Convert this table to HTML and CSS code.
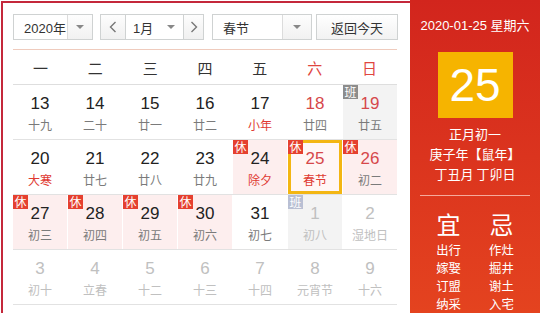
FILE: index.html
```html
<!DOCTYPE html>
<html lang="zh-CN">
<head>
<meta charset="utf-8">
<title>万年历</title>
<link rel="stylesheet" href="styles.css">
</head>
<body>
<div class="wrap">
  <div class="main">
    <div class="toolbar">
      <div class="sel sel-year"><span class="sel-text">2020年</span><span class="sel-arrow"><i class="tri"></i></span></div>
      <div class="monthgroup">
        <span class="nav"><svg width="8" height="12" viewBox="0 0 8 12"><polyline points="6.5,1 1.5,6 6.5,11" fill="none" stroke="#777" stroke-width="1.4"/></svg></span>
        <div class="sel sel-month"><span class="sel-text">1月</span><span class="sel-arrow plain"><i class="tri"></i></span></div>
        <span class="nav"><svg width="8" height="12" viewBox="0 0 8 12"><polyline points="1.5,1 6.5,6 1.5,11" fill="none" stroke="#777" stroke-width="1.4"/></svg></span>
      </div>
      <div class="sel sel-hol"><span class="sel-text">春节</span><span class="sel-arrow"><i class="tri"></i></span></div>
      <span class="today">返回今天</span>
    </div>

    <div class="weekhead">
      <span>一</span><span>二</span><span>三</span><span>四</span><span>五</span><span class="red">六</span><span class="red">日</span>
    </div>

    <div class="rows">
      <div class="row">
        <div class="c"><b>13</b><i>十九</i></div>
        <div class="c"><b>14</b><i>二十</i></div>
        <div class="c"><b>15</b><i>廿一</i></div>
        <div class="c"><b>16</b><i>廿二</i></div>
        <div class="c fest"><b>17</b><i>小年</i></div>
        <div class="c we"><b>18</b><i>廿四</i></div>
        <div class="c we work"><em class="badge ban">班</em><b>19</b><i>廿五</i></div>
      </div>
      <div class="row">
        <div class="c fest"><b>20</b><i>大寒</i></div>
        <div class="c"><b>21</b><i>廿七</i></div>
        <div class="c"><b>22</b><i>廿八</i></div>
        <div class="c"><b>23</b><i>廿九</i></div>
        <div class="c hol fest"><em class="badge xiu">休</em><b>24</b><i>除夕</i></div>
        <div class="c hol fest we cur"><em class="badge xiu">休</em><b>25</b><i>春节</i></div>
        <div class="c hol we"><em class="badge xiu">休</em><b>26</b><i>初二</i></div>
      </div>
      <div class="row">
        <div class="c hol"><em class="badge xiu">休</em><b>27</b><i>初三</i></div>
        <div class="c hol"><em class="badge xiu">休</em><b>28</b><i>初四</i></div>
        <div class="c hol"><em class="badge xiu">休</em><b>29</b><i>初五</i></div>
        <div class="c hol"><em class="badge xiu">休</em><b>30</b><i>初六</i></div>
        <div class="c"><b>31</b><i>初七</i></div>
        <div class="c other work"><em class="badge ban faded">班</em><b>1</b><i>初八</i></div>
        <div class="c other"><b>2</b><i>湿地日</i></div>
      </div>
      <div class="row">
        <div class="c other"><b>3</b><i>初十</i></div>
        <div class="c other"><b>4</b><i>立春</i></div>
        <div class="c other"><b>5</b><i>十二</i></div>
        <div class="c other"><b>6</b><i>十三</i></div>
        <div class="c other"><b>7</b><i>十四</i></div>
        <div class="c other"><b>8</b><i>元宵节</i></div>
        <div class="c other"><b>9</b><i>十六</i></div>
      </div>
    </div>
  </div>

  <div class="panel">
    <div class="p-date">2020-01-25 星期六</div>
    <div class="p-day">25</div>
    <div class="p-info">
      <div>正月初一</div>
      <div>庚子年【鼠年】</div>
      <div>丁丑月 丁卯日</div>
    </div>
    <div class="p-line"></div>
    <div class="p-yj">
      <div class="p-col">
        <div class="p-big">宜</div>
        <div>出行</div><div>嫁娶</div><div>订盟</div><div>纳采</div>
      </div>
      <div class="p-col">
        <div class="p-big">忌</div>
        <div>作灶</div><div>掘井</div><div>谢土</div><div>入宅</div>
      </div>
    </div>
  </div>
</div>
</body>
</html>
```

FILE: styles.css
```css
* { box-sizing: border-box; }
html, body { margin: 0; padding: 0; background: #fff; }
body {
  font-family: "Liberation Sans", "Noto Sans CJK SC", sans-serif;
  color: #333;
  overflow: hidden;
}
.wrap {
  display: flex;
  width: 545px;
  height: 313px;
  overflow: hidden;
}
.main {
  width: 409px;
  margin: 1px 0 0 1px;
  border-top: 2px solid #c4283b;
  border-left: 2px solid #c4283b;
  padding: 11px 12px 0 10px;
}

/* toolbar */
.toolbar {
  display: flex;
  align-items: stretch;
  height: 26px;
  font-size: 13px;
}
.sel {
  display: flex;
  border: 1px solid #cfd2d2;
  background: #fff;
}
.sel-text {
  flex: 1;
  display: flex;
  align-items: center;
  padding-left: 10px;
  color: #333;
}
.sel-arrow {
  width: 25px;
  display: flex;
  align-items: center;
  justify-content: center;
  border-left: 1px solid #dcdcdc;
  background: linear-gradient(#fdfdfd, #f1f1f1);
}
.sel-arrow.plain { border-left: none; background: none; width: 24px; }
.tri {
  width: 0; height: 0;
  border-left: 4px solid transparent;
  border-right: 4px solid transparent;
  border-top: 4px solid #888;
}
.sel-year { width: 80px; }
.monthgroup {
  display: flex;
  margin-left: 7px;
}
.nav {
  width: 26px;
  display: flex;
  align-items: center;
  justify-content: center;
  border: 1px solid #cfd2d2;
  background: linear-gradient(#fdfdfd, #f0f0f0);
}
.nav + .sel { border-left: none; border-right: none; }
.sel-month { width: 57px; }
.sel-month .sel-text { padding-left: 7px; }
.monthgroup .nav:last-child { width: 21px; }
.sel-hol { width: 100px; margin-left: 8px; }
.sel-hol .sel-text { padding-left: 10px; }
.sel-hol .sel-arrow { width: 29px; }
.today {
  width: 82px;
  margin-left: 4px;
  display: flex;
  align-items: center;
  justify-content: center;
  border: 1px solid #cfd2d2;
  background: linear-gradient(#fff, #f2f2f2);
  color: #333;
}

/* week header */
.weekhead {
  margin-top: 9px;
  width: 384px;
  height: 36px;
  border-top: 1px solid #efcbbd;
  border-bottom: 1px solid #dedede;
  display: grid;
  grid-template-columns: repeat(7, 1fr);
  align-items: center;
  justify-items: center;
  font-family: "Noto Sans CJK SC", sans-serif;
  font-size: 15px;
  color: #333;
}
.weekhead .red { color: #e0463f; }

/* day grid */
.rows { width: 384px; }
.row {
  display: grid;
  grid-template-columns: repeat(7, 54px);
  column-gap: 1px;
  height: 55px;
  border-bottom: 1px solid #e2e2e2;
}
.c {
  position: relative;
  display: flex;
  flex-direction: column;
  align-items: center;
  padding-top: 8px;
  height: 54px;
}
.c b {
  font-weight: normal;
  font-size: 17px;
  line-height: 22px;
  color: #222;
}
.c i {
  font-style: normal;
  font-family: "Noto Sans CJK SC", sans-serif;
  font-size: 12px;
  line-height: 17px;
  margin-top: 1px;
  color: #7a7a7a;
}
.c.we b { color: #d6484b; }
.c.fest i { color: #e03a32; }
.c.hol { background: #fdeeee; }
.c.work { background: #f3f3f3; }
.c.other b, .c.other i { color: #c0c0c0; }
.c.cur {
  background: #fff6f5;
  box-shadow: inset 0 0 0 3px #f3b613;
}
.badge {
  position: absolute;
  left: 0;
  top: 0;
  width: 15px;
  height: 14px;
  font-style: normal;
  font-family: "Noto Sans CJK SC", sans-serif;
  font-size: 12px;
  line-height: 14px;
  text-align: center;
  color: #fff;
}
.badge.xiu { background: #e5402f; }
.badge.ban { background: #8c8c8c; }
.badge.ban.faded { background: #b9bfd3; }

/* side panel */
.panel {
  width: 130px;
  height: 313px;
  background: linear-gradient(#d2251d, #e4431f);
  color: #fff;
  font-family: "Noto Sans CJK SC", sans-serif;
  display: flex;
  flex-direction: column;
  align-items: center;
}
.p-date {
  margin-top: 16px;
  font-family: "Liberation Sans", "Noto Sans CJK SC", sans-serif;
  font-size: 13px;
  line-height: 20px;
}
.p-day {
  margin-top: 16px;
  width: 75px;
  height: 73px;
  background: #f6b400;
  display: flex;
  align-items: center;
  justify-content: center;
  font-family: "Liberation Sans", sans-serif;
  font-size: 46px;
  color: #fff;
}
.p-info {
  margin-top: 6px;
  font-size: 13px;
  line-height: 20px;
  text-align: center;
}
.p-line {
  margin-top: 11px;
  width: 110px;
  height: 1px;
  background: rgba(255, 220, 210, 0.7);
}
.p-yj {
  margin-top: 11px;
  display: flex;
  gap: 28px;
}
.p-col {
  display: flex;
  flex-direction: column;
  align-items: center;
  font-size: 12.4px;
  line-height: 18px;
}
.p-big {
  font-size: 24px;
  line-height: 34px;
}
```
